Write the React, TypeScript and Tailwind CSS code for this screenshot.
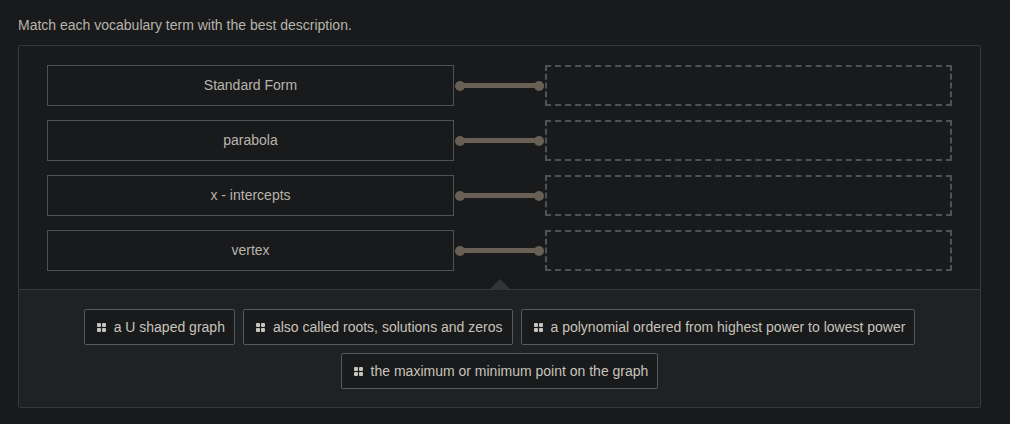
import { useState } from "react";

const terms = ["Standard Form", "parabola", "x - intercepts", "vertex"];

const responses = [
  "a U shaped graph",
  "also called roots, solutions and zeros",
  "a polynomial ordered from highest power to lowest power",
  "the maximum or minimum point on the graph",
];

const DragIcon = () => (
  <svg
    width="9"
    height="9"
    viewBox="0 0 9 9"
    fill="currentColor"
    className="shrink-0"
    aria-hidden="true"
  >
    <rect x="0" y="0" width="4" height="4" rx="1" />
    <rect x="5" y="0" width="4" height="4" rx="1" />
    <rect x="0" y="5" width="4" height="4" rx="1" />
    <rect x="5" y="5" width="4" height="4" rx="1" />
  </svg>
);

const Connector = () => (
  <div className="mx-px flex items-center" aria-hidden="true">
    <span className="size-[10px] shrink-0 rounded-full bg-[#696055]" />
    <span className="-mx-px h-[5px] flex-1 bg-[#696055]" />
    <span className="size-[10px] shrink-0 rounded-full bg-[#696055]" />
  </div>
);

type ChipProps = {
  text: string;
  onClick?: () => void;
};

const Chip = ({ text, onClick }: ChipProps) => (
  <button
    type="button"
    draggable
    onClick={onClick}
    onDragStart={(e) => e.dataTransfer.setData("text/plain", text)}
    className="flex cursor-move items-center gap-2 rounded-xs border border-[#545b5e] bg-[#181a1b] py-[7px] pr-[9px] pl-3 text-[#c8c3bc]"
  >
    <DragIcon />
    {text}
  </button>
);

export default function App() {
  const [answers, setAnswers] = useState<(string | null)[]>(
    terms.map(() => null)
  );

  const place = (index: number, text: string) => {
    if (!responses.includes(text)) return;
    setAnswers((prev) =>
      prev.map((a, i) => (i === index ? text : a === text ? null : a))
    );
  };

  const remove = (index: number) => {
    setAnswers((prev) => prev.map((a, i) => (i === index ? null : a)));
  };

  return (
    <main className="min-h-screen bg-[#181a1b] pt-[15px] pr-[29px] pb-4 pl-[18px] font-['Liberation_Sans',Arial,sans-serif] text-sm text-[#b9b4ab]">
      <p className="mb-[10px]">
        Match each vocabulary term with the best description.
      </p>

      <section className="rounded-xs border border-[#35393b]">
        <div className="flex flex-col gap-[14px] px-7 pt-[19px] pb-[18px]">
          {terms.map((term, index) => {
            const answer = answers[index];
            return (
              <div
                key={term}
                className="grid grid-cols-[1fr_91px_1fr] items-stretch"
              >
                <div className="flex min-h-[41px] items-center justify-center border border-[#4b5356] px-2 pb-[2px] text-center">
                  {term}
                </div>
                <Connector />
                <div
                  aria-label={`Answer for ${term}`}
                  onDragOver={(e) => e.preventDefault()}
                  onDrop={(e) => {
                    e.preventDefault();
                    place(index, e.dataTransfer.getData("text/plain"));
                  }}
                  className="flex items-center justify-center border-2 border-dashed border-[#4b5356]"
                >
                  {answer && (
                    <Chip text={answer} onClick={() => remove(index)} />
                  )}
                </div>
              </div>
            );
          })}
        </div>

        <div className="relative flex flex-wrap justify-center gap-2 border-t border-[#35393b] bg-[#1e2224] px-7 pt-[19px] pb-[18px]">
          {/* arrow pointing up at the drop zones */}
          <svg
            width="22"
            height="11"
            viewBox="0 0 22 11"
            className="absolute bottom-full left-1/2 -translate-x-1/2"
            aria-hidden="true"
          >
            <path d="M11 0L22 11H0z" fill="#303638" />
          </svg>
          {responses
            .filter((text) => !answers.includes(text))
            .map((text) => (
              <Chip key={text} text={text} />
            ))}
        </div>
      </section>
    </main>
  );
}
